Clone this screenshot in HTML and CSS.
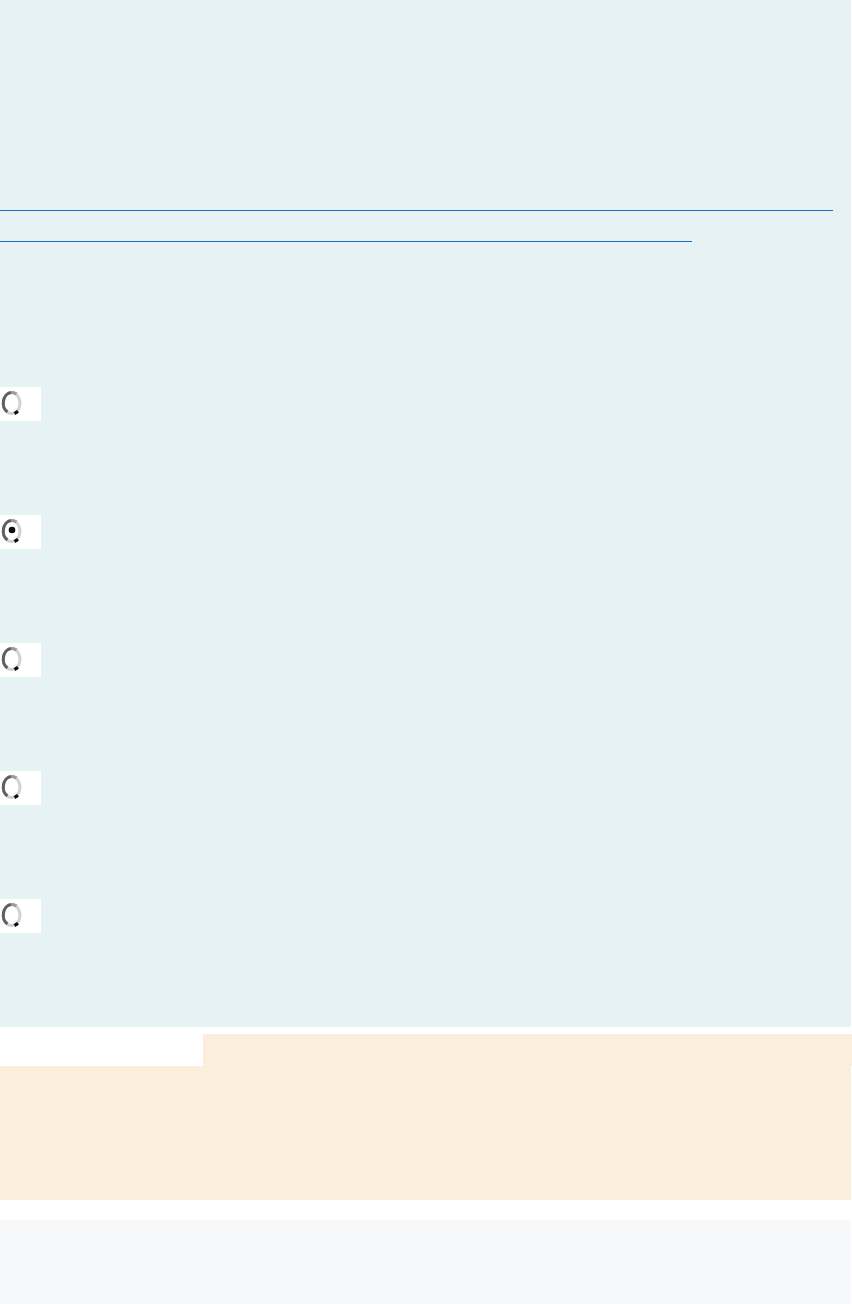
FILE: index.html
```html
<!DOCTYPE html>
<html lang="en">
<head>
    <meta charset="UTF-8">
    <meta name="viewport" content="width=device-width, initial-scale=1.0">
    <title>Options</title>
    <link rel="stylesheet" href="styles.css">
</head>
<body>
    <div class="panel">
        <div class="link-line"></div>
        <div class="link-line short"></div>

        <div class="options">
            <div class="radio-box">
                <svg class="radio" width="24" height="34" viewBox="0 0 24 34">
                    <ellipse cx="11.5" cy="16" rx="8.5" ry="10.5" fill="#fff" stroke="#d2d2d2" stroke-width="3"/>
                    <path d="M7.5 25 A8.5 10.5 0 0 1 11.5 5.5" fill="none" stroke="#5f5f5f" stroke-width="3"/>
                    <path d="M12 5.5 A8.5 10.5 0 0 1 16.5 7" fill="none" stroke="#9a9a9a" stroke-width="3"/>
                    <path d="M14.5 26.6 L18 24.2" stroke="#0d0d0d" stroke-width="3.2"/>
                </svg>
            </div>
            <div class="radio-box">
                <svg class="radio" width="24" height="34" viewBox="0 0 24 34">
                    <ellipse cx="11.5" cy="16" rx="8.5" ry="10.5" fill="#fff" stroke="#d2d2d2" stroke-width="3"/>
                    <path d="M7.5 25 A8.5 10.5 0 0 1 11.5 5.5" fill="none" stroke="#5f5f5f" stroke-width="3"/>
                    <path d="M12 5.5 A8.5 10.5 0 0 1 16.5 7" fill="none" stroke="#9a9a9a" stroke-width="3"/>
                    <path d="M14.5 26.6 L18 24.2" stroke="#0d0d0d" stroke-width="3.2"/>
                    <circle cx="12" cy="15" r="3.3" fill="#0d0d0d"/>
                </svg>
            </div>
            <div class="radio-box">
                <svg class="radio" width="24" height="34" viewBox="0 0 24 34">
                    <ellipse cx="11.5" cy="16" rx="8.5" ry="10.5" fill="#fff" stroke="#d2d2d2" stroke-width="3"/>
                    <path d="M7.5 25 A8.5 10.5 0 0 1 11.5 5.5" fill="none" stroke="#5f5f5f" stroke-width="3"/>
                    <path d="M12 5.5 A8.5 10.5 0 0 1 16.5 7" fill="none" stroke="#9a9a9a" stroke-width="3"/>
                    <path d="M14.5 26.6 L18 24.2" stroke="#0d0d0d" stroke-width="3.2"/>
                </svg>
            </div>
            <div class="radio-box">
                <svg class="radio" width="24" height="34" viewBox="0 0 24 34">
                    <ellipse cx="11.5" cy="16" rx="8.5" ry="10.5" fill="#fff" stroke="#d2d2d2" stroke-width="3"/>
                    <path d="M7.5 25 A8.5 10.5 0 0 1 11.5 5.5" fill="none" stroke="#5f5f5f" stroke-width="3"/>
                    <path d="M12 5.5 A8.5 10.5 0 0 1 16.5 7" fill="none" stroke="#9a9a9a" stroke-width="3"/>
                    <path d="M14.5 26.6 L18 24.2" stroke="#0d0d0d" stroke-width="3.2"/>
                </svg>
            </div>
            <div class="radio-box">
                <svg class="radio" width="24" height="34" viewBox="0 0 24 34">
                    <ellipse cx="11.5" cy="16" rx="8.5" ry="10.5" fill="#fff" stroke="#d2d2d2" stroke-width="3"/>
                    <path d="M7.5 25 A8.5 10.5 0 0 1 11.5 5.5" fill="none" stroke="#5f5f5f" stroke-width="3"/>
                    <path d="M12 5.5 A8.5 10.5 0 0 1 16.5 7" fill="none" stroke="#9a9a9a" stroke-width="3"/>
                    <path d="M14.5 26.6 L18 24.2" stroke="#0d0d0d" stroke-width="3.2"/>
                </svg>
            </div>
        </div>
    </div>

    <div class="notice">
        <div class="notice-tab"></div>
        <div class="notice-body"></div>
    </div>

    <div class="footer"></div>
</body>
</html>
```

FILE: styles.css
```css
body {
    margin: 0;
    font-family: "Liberation Sans", Arial, sans-serif;
    background-color: #fff;
}
.panel {
    width: 851px;
    height: 1027px;
    box-sizing: border-box;
    padding-top: 210px;
    background-color: #e6f2f4;
}
.link-line {
    width: 833px;
    height: 1px;
    background-color: #1a6fc4;
}
.link-line.short {
    width: 692px;
    margin-top: 30px;
}
.options {
    display: flex;
    flex-direction: column;
    gap: 94px;
    margin-top: 145px;
}
.radio-box {
    width: 41px;
    height: 34px;
    background-color: #fff;
}
.radio {
    display: block;
}
.notice {
    margin-top: 7px;
}
.notice-tab {
    margin-left: 203px;
    height: 32px;
    background-color: #fbeedc;
}
.notice-body {
    width: 851px;
    height: 134px;
    background-color: #fbeedc;
}
.footer {
    width: 851px;
    height: 84px;
    margin-top: 20px;
    background-color: #f7f8fa;
}
```
